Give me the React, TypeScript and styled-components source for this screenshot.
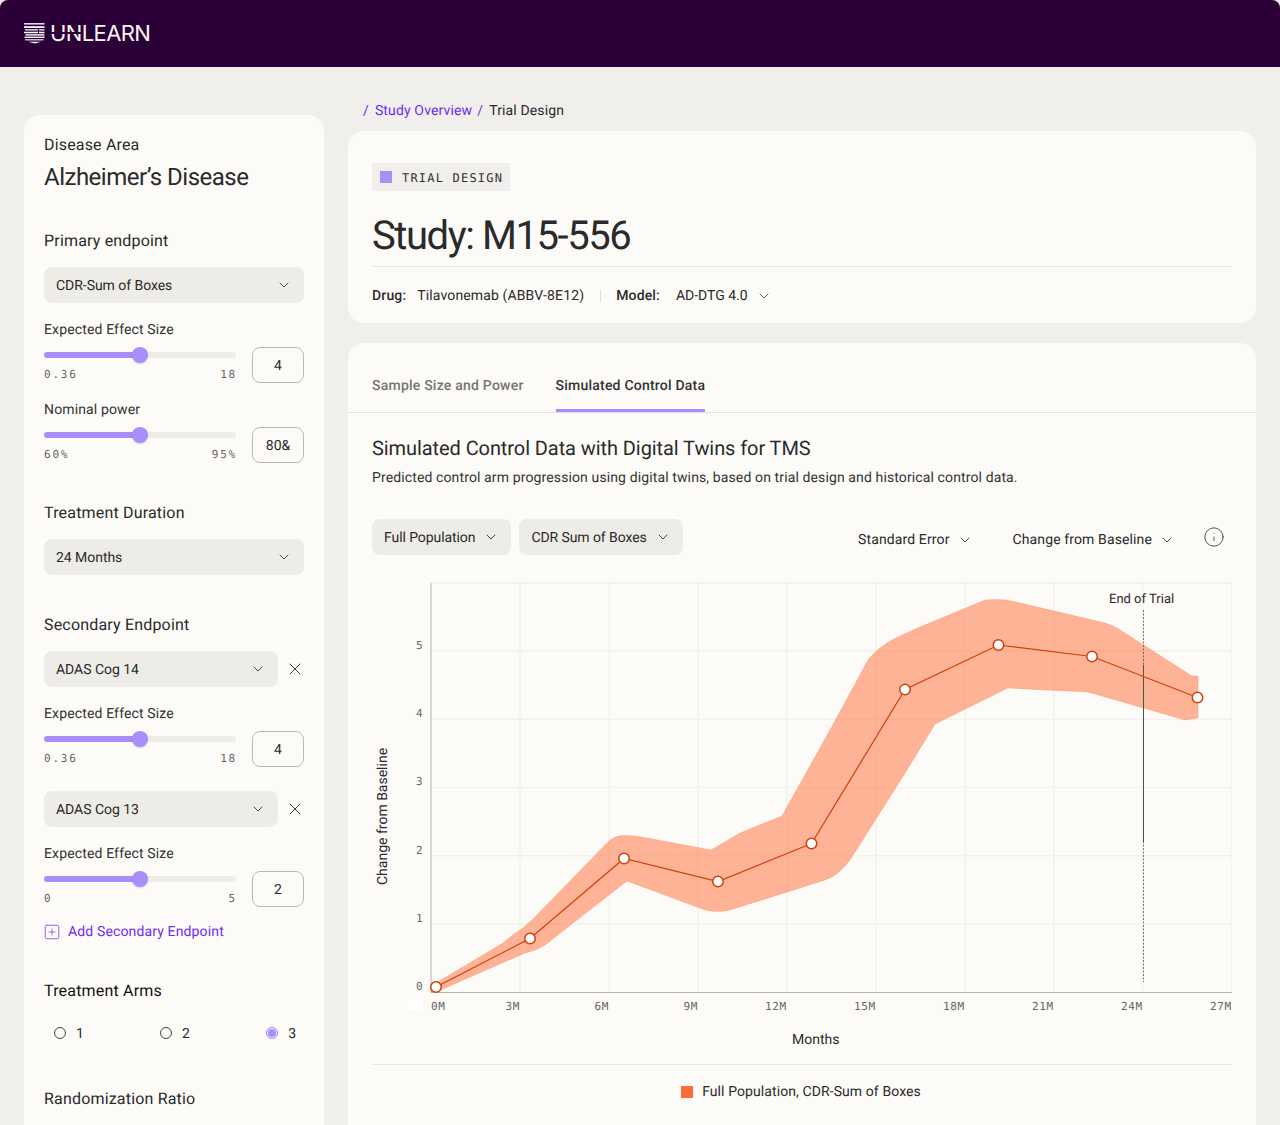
import React from "react";
import styled, { createGlobalStyle } from "styled-components";
import { ChevronDown, X, Info, SquarePlus } from "lucide-react";

const GlobalStyle = createGlobalStyle`
  html, body { margin: 0; padding: 0; background: #f0efeb; }
  * { box-sizing: border-box; }
  body {
    font-family: Roboto, "Liberation Sans", sans-serif;
    color: #2a2a2a;
    text-rendering: geometricPrecision;
  }
`;

const Page = styled.div`
  width: 1280px;
  height: 1125px;
  overflow: hidden;
  background: #f0efeb;
`;
const Header = styled.header`
  height: 67px;
  background: #2b0038;
  border-radius: 8px 8px 0 0;
  display: flex;
  align-items: center;
  padding-left: 24px;
  gap: 5px;
`;
const Wordmark = styled.div`
  position: relative;
  color: #fbf9f6;
  font-family: Inter, Roboto, sans-serif;
  font-size: 22px;
  font-weight: 400;
  letter-spacing: -0.6px;
  line-height: 24px;
  &::after {
    content: "";
    position: absolute;
    left: 0;
    top: 10px;
    width: 31px;
    height: 2px;
    background: #2b0038;
  }
`;
const Body = styled.div`
  display: flex;
  gap: 24px;
  padding: 0 24px;
  align-items: flex-start;
`;
const Sidebar = styled.aside`
  width: 300px;
  flex: none;
  margin-top: 48px;
  background: #fcfbf8;
  border-radius: 16px 16px 0 0;
  padding: 20px 20px 40px;
`;
const Main = styled.main`
  flex: 1;
  min-width: 0;
`;
const Breadcrumb = styled.nav`
  height: 64px;
  display: flex;
  gap: 5px;
  align-items: center;
  padding: 24px 0 0 15px;
  font-size: 14px;
  letter-spacing: 0.14px;
`;
const Crumb = styled.span<{ $link?: boolean }>`
  color: ${(p) => (p.$link ? "#6f2cf5" : "#2a2a2a")};
`;
const CrumbSlash = styled(Crumb)`
  margin-right: 1px;
`;
const Card = styled.section`
  background: #fcfbf8;
  border-radius: 16px;
`;
const SmallLabel = styled.div`
  font-size: 16px;
  line-height: 20px;
  letter-spacing: 0.17px;
`;
const DiseaseName = styled.h2`
  margin: 8px 0 0;
  font-size: 24px;
  line-height: 28px;
  font-weight: 400;
  letter-spacing: -0.5px;
`;
const SectionTitle = styled.h3<{ $top: number; $dark?: boolean }>`
  margin: ${(p) => p.$top}px 0 16px;
  font-size: 16px;
  line-height: 20px;
  font-weight: 400;
  letter-spacing: 0.18px;
  color: ${(p) => (p.$dark ? "#111" : "#2a2a2a")};
`;
const SelectBox = styled.div`
  height: 36px;
  flex: 1;
  background: #eeece7;
  border-radius: 8px;
  padding: 2px 12px 0;
  display: flex;
  align-items: center;
  justify-content: space-between;
  font-size: 14px;
  letter-spacing: -0.04px;
  color: #2a2a2a;
  svg { margin-top: -2px; }
`;
const SelectRow = styled.div<{ $top?: number }>`
  display: flex;
  align-items: center;
  margin-top: ${(p) => p.$top ?? 0}px;
`;
const CloseSlot = styled.div`
  width: 27px;
  flex: none;
  display: flex;
  justify-content: flex-end;
  margin-right: -1px;
  color: #2a2a2a;
`;
const FieldLabel = styled.div<{ $top: number }>`
  margin-top: ${(p) => p.$top + 1}px;
  font-size: 14px;
  line-height: 18px;
  letter-spacing: 0.14px;
  color: #333;
`;
const SliderRow = styled.div`
  margin-top: 8px;
  display: grid;
  grid-template-columns: 192px 52px;
  column-gap: 16px;
  align-items: start;
`;
const SliderWrap = styled.div`
  padding-top: 5px;
`;
const Track = styled.div`
  position: relative;
  height: 6px;
  border-radius: 3px;
  background: #eeece7;
`;
const Fill = styled.div`
  height: 100%;
  border-radius: 3px;
  background: #a78ef8;
`;
const Thumb = styled.div`
  position: absolute;
  top: -5px;
  width: 16px;
  height: 16px;
  margin-left: -8px;
  border-radius: 50%;
  background: #a78ef8;
  box-shadow: 0 1px 2px rgba(60, 40, 120, 0.2);
`;
const Ends = styled.div`
  margin-top: 10px;
  display: flex;
  justify-content: space-between;
  font-family: "DejaVu Sans Mono", "Liberation Mono", monospace;
  font-size: 11px;
  line-height: 14px;
  letter-spacing: 1.8px;
  color: #666;
  margin-right: -1px;
`;
const ValueBox = styled.div`
  height: 36px;
  border: 1px solid #bcbab6;
  border-radius: 8px;
  padding-top: 2px;
  display: flex;
  align-items: center;
  justify-content: center;
  font-size: 14px;
`;
const AddLink = styled.div`
  margin: 16px 0 0 -1px;
  display: flex;
  align-items: center;
  gap: 7px;
  color: #6f2cf5;
  font-size: 14px;
  line-height: 18px;
  letter-spacing: 0.14px;
  svg { color: #8a5cf6; margin-top: -1px; }
`;
const RadioRow = styled.div`
  display: flex;
  justify-content: space-between;
  margin-top: 23px;
  padding: 0 8px 0 10px;
  height: 18px;
`;
const RadioItem = styled.label`
  display: flex;
  align-items: center;
  gap: 10px;
  font-size: 14px;
  padding-top: 2px;
`;
const RadioDot = styled.span<{ $on?: boolean }>`
  width: 12px;
  height: 12px;
  margin-top: -2px;
  border-radius: 50%;
  border: 1px solid ${(p) => (p.$on ? "#a78ef8" : "#444")};
  background: ${(p) => (p.$on ? "#a78ef8" : "transparent")};
  box-shadow: ${(p) => (p.$on ? "inset 0 0 0 1px #fcfbf8" : "none")};
`;

const TitleCard = styled(Card)`
  height: 192px;
  padding: 32px 24px 0;
`;
const Tag = styled.div`
  display: inline-flex;
  align-items: center;
  height: 28px;
  gap: 10px;
  padding: 1px 7px 0 8px;
  background: #f0efeb;
  font-family: "DejaVu Sans Mono", "Liberation Mono", monospace;
  font-size: 12px;
  letter-spacing: 1.2px;
  color: #333;
`;
const TagSwatch = styled.span`
  width: 12px;
  height: 12px;
  margin-top: -1px;
  background: #a78ef8;
`;
const StudyTitle = styled.h1`
  margin: 0;
  padding: 21px 0 6px;
  font-size: 40px;
  line-height: 48px;
  font-weight: 400;
  letter-spacing: -1.43px;
  border-bottom: 1px solid #e7e5e8;
`;
const MetaRow = styled.div`
  display: flex;
  align-items: center;
  height: 57px;
  font-size: 14px;
  padding-top: 1px;
`;
const MetaKey = styled.span`
  font-weight: 500;
  letter-spacing: 0.15px;
  margin-right: 11px;
`;
const MetaKeyWide = styled(MetaKey)`
  margin-right: 16px;
`;
const MetaDrug = styled.span`
  letter-spacing: 0.13px;
`;
const MetaDivider = styled.span`
  width: 1px;
  height: 12px;
  background: #e0dedb;
  margin: 0 15px 0 16px;
`;
const MetaChevron = styled.span`
  display: inline-flex;
  margin-left: 8px;
  color: #444;
`;
const DataCard = styled(Card)`
  margin-top: 20px;
  height: 900px;
  border-radius: 16px 16px 0 0;
`;
const Tabs = styled.div`
  display: flex;
  gap: 32px;
  height: 70px;
  padding: 0 24px;
  border-bottom: 1px solid #e2e0e0;
`;
const Tab = styled.div<{ $active?: boolean }>`
  display: flex;
  align-items: center;
  height: 69px;
  font-size: 14px;
  font-weight: 500;
  letter-spacing: 0.22px;
  color: ${(p) => (p.$active ? "#333" : "#77756f")};
  border-bottom: 3px solid ${(p) => (p.$active ? "#a78ef8" : "transparent")};
  padding-top: 20px;
`;
const Panel = styled.div`
  padding: 23px 24px 0;
`;
const PanelTitle = styled.h2`
  margin: 0;
  font-size: 20px;
  line-height: 24px;
  font-weight: 400;
  letter-spacing: -0.08px;
`;
const PanelDesc = styled.p`
  margin: 8px 0 -1px;
  font-size: 14px;
  line-height: 20px;
  letter-spacing: 0.12px;
  color: #333;
`;
const Controls = styled.div`
  margin-top: 32px;
  display: flex;
  align-items: center;
  height: 36px;
  gap: 8px;
`;
const PillSelect = styled.div`
  height: 36px;
  background: #eeece7;
  border-radius: 8px;
  padding: 2px 12px 0;
  display: flex;
  align-items: center;
  gap: 8px;
  font-size: 14px;
  letter-spacing: -0.08px;
  svg { margin-top: -2px; }
`;
const Spacer = styled.div`
  flex: 1;
`;
const PlainSelect = styled.div<{ $gap: number }>`
  display: flex;
  align-items: center;
  gap: 7px;
  font-size: 14px;
  letter-spacing: 0.12px;
  margin-top: 6px;
  margin-right: ${(p) => p.$gap}px;
`;
const InfoSlot = styled.div`
  display: flex;
  margin-right: 7px;
  color: #444;
`;
const ChartSvg = styled.svg`
  display: block;
  margin-top: 20px;
  width: 860px;
  height: 489px;
`;
const LegendBar = styled.div`
  border-top: 1px solid #e7e5e8;
  height: 54px;
  display: flex;
  align-items: center;
  justify-content: center;
  gap: 9px;
  padding-right: 2px;
  font-size: 14px;
  letter-spacing: 0.09px;
`;
const LegendSwatch = styled.span`
  width: 12px;
  height: 12px;
  background: #ff6b35;
`;

const Logo = () => (
  <svg width="21" height="21" viewBox="0 0 21 21" fill="none">
    <path d="M0 0H20.5V1.6H0Z" fill="#e6d6e6" />
    <path d="M0 3.2H20.5V5H0Z" fill="#ffffff" />
    <path d="M1 6.2H14V7.6H1ZM15 6.2H20.5V7.6H15Z" fill="#ffffff" />
    <path d="M0 8.8H14V10.2H0ZM15 8.8H20.5V10.2H15Z" fill="#ffffff" />
    <path d="M1.5 11.2H20.5V12.6H1.5Z" fill="#ffffff" />
    <path d="M0.5 13.6H20.5V15H0.5Z" fill="#ffffff" />
    <path d="M1 16.2H19.6V17.4H1Z" fill="#efe4ef" />
    <path d="M4 18.8H17L11 20.6Z" fill="#f8f3f6" />
  </svg>
);

const Chevron = () => <ChevronDown size={16} strokeWidth={1.25} />;

const Slider = ({ min, max }: { min: string; max: string }) => (
  <SliderWrap>
    <Track>
      <Fill style={{ width: "50%" }} />
      <Thumb style={{ left: "50%" }} />
    </Track>
    <Ends>
      <span>{min}</span>
      <span>{max}</span>
    </Ends>
  </SliderWrap>
);

const Field = ({
  top,
  label,
  min,
  max,
  value,
}: {
  top: number;
  label: string;
  min: string;
  max: string;
  value: string;
}) => (
  <>
    <FieldLabel $top={top}>{label}</FieldLabel>
    <SliderRow>
      <Slider min={min} max={max} />
      <ValueBox>{value}</ValueBox>
    </SliderRow>
  </>
);

const gridX = [520, 609, 698, 787, 876, 965, 1054, 1143, 1232];
const gridY = [583, 651, 719.3, 787.5, 855.7, 924];
const yLabels = ["0", "1", "2", "3", "4", "5"];
const xLabels: [string, number][] = [
  ["0M", 431],
  ["3M", 505.5],
  ["6M", 594.5],
  ["9M", 683.5],
  ["12M", 765],
  ["15M", 854],
  ["18M", 943],
  ["21M", 1032],
  ["24M", 1121],
  ["27M", 1210],
];
const points: [number, number][] = [
  [436, 987],
  [530, 938.5],
  [624, 858.5],
  [718, 881.5],
  [811.5, 843.5],
  [905, 689.5],
  [998.5, 645],
  [1092, 656.5],
  [1197.5, 697.5],
];
const band =
  "M431 987 L436 983 L503 943 Q515 933 523 928 L533 919 L608 842 Q614 836 622 835.5 Q632 835 642 837 L711 850 L740 833 L782 816 L830 730 L868 660 Q876 650 887 643 Q900 635 937 620 L985 600 Q996 599 1007 600 L1105 623 Q1112 625 1117 628 L1192 676 L1198 676 L1198 718 L1185 720 L1088 692 L1008 688 L935 724 L907 770 L850 860 Q838 876 825 880 L730 910 Q718 913 705 910 L627 881 L545 945 Q535 951 525 953 L436 992 L431 992 Z";

const Chart = () => (
  <ChartSvg viewBox="372 575 860 489">
    {gridX.map((x) => (
      <line key={x} x1={x} x2={x} y1={583} y2={992} stroke="#f3f1ee" strokeWidth={1.4} />
    ))}
    {gridY.map((y) => (
      <line key={y} x1={431} x2={1232} y1={y} y2={y} stroke="#f3f1ee" strokeWidth={1.4} />
    ))}
    <rect x={408} y={999} width={14} height={11} fill="#ffffff" />
    <line x1={431} x2={431} y1={583} y2={992.5} stroke="#b4b3b1" />
    <line x1={431} x2={1232} y1={992.5} y2={992.5} stroke="#b4b3b1" />
    <path d={band} fill="#ff6b35" fillOpacity={0.5} stroke="#ff6b35" strokeOpacity={0.25} strokeWidth={1} />
    <line x1={1143.5} x2={1143.5} y1={610} y2={982} stroke="#555" strokeDasharray="2 1.5" strokeWidth={0.8} />
    <line x1={1143.5} x2={1143.5} y1={665} y2={842} stroke="#3a6236" />
    <polyline
      points={points.map((p) => p.join(",")).join(" ")}
      fill="none"
      stroke="#d13f0a"
      strokeWidth={1.2}
    />
    {points.map(([x, y]) => (
      <circle key={x} cx={x} cy={y} r={5.25} fill="#ffffff" stroke="#d13f0a" strokeWidth={1.5} />
    ))}
    <g fontFamily="'DejaVu Sans Mono', monospace" fontSize={11} fill="#666">
      {yLabels.map((l, i) => (
        <text key={l} x={416} y={990 - i * 68.2}>
          {l}
        </text>
      ))}
      {xLabels.map(([l, x]) => (
        <text key={l} x={x} y={1010} letterSpacing={0.6}>
          {l}
        </text>
      ))}
    </g>
    <g fontFamily="Roboto, sans-serif" fontSize={13} fill="#2a2a2a">
      <text x={1109} y={603}>
        End of Trial
      </text>
    </g>
    <g fontFamily="Roboto, sans-serif" fontSize={14} fill="#2a2a2a">
      <text x={792} y={1044}>
        Months
      </text>
      <text transform="translate(387 885) rotate(-90)">Change from Baseline</text>
    </g>
  </ChartSvg>
);

export default function App() {
  return (
    <Page>
      <GlobalStyle />
      <Header>
        <Logo />
        <Wordmark>UNLEARN</Wordmark>
      </Header>
      <Body>
        <Sidebar>
          <SmallLabel>Disease Area</SmallLabel>
          <DiseaseName>Alzheimer’s Disease</DiseaseName>

          <SectionTitle $top={40}>Primary endpoint</SectionTitle>
          <SelectRow>
            <SelectBox>
              CDR-Sum of Boxes
              <Chevron />
            </SelectBox>
          </SelectRow>
          <Field top={17} label="Expected Effect Size" min="0.36" max="18" value="4" />
          <Field top={17} label="Nominal power" min="60%" max="95%" value="80&" />

          <SectionTitle $top={40}>Treatment Duration</SectionTitle>
          <SelectRow>
            <SelectBox>
              24 Months
              <Chevron />
            </SelectBox>
          </SelectRow>

          <SectionTitle $top={40}>Secondary Endpoint</SectionTitle>
          <SelectRow>
            <SelectBox>
              ADAS Cog 14
              <Chevron />
            </SelectBox>
            <CloseSlot>
              <X size={20} strokeWidth={1.1} />
            </CloseSlot>
          </SelectRow>
          <Field top={17} label="Expected Effect Size" min="0.36" max="18" value="4" />
          <SelectRow $top={24}>
            <SelectBox>
              ADAS Cog 13
              <Chevron />
            </SelectBox>
            <CloseSlot>
              <X size={20} strokeWidth={1.1} />
            </CloseSlot>
          </SelectRow>
          <Field top={17} label="Expected Effect Size" min="0" max="5" value="2" />
          <AddLink>
            <SquarePlus size={18} strokeWidth={1.25} />
            Add Secondary Endpoint
          </AddLink>

          <SectionTitle $top={40} $dark>
            Treatment Arms
          </SectionTitle>
          <RadioRow>
            <RadioItem>
              <RadioDot />1
            </RadioItem>
            <RadioItem>
              <RadioDot />2
            </RadioItem>
            <RadioItem>
              <RadioDot $on />3
            </RadioItem>
          </RadioRow>

          <SectionTitle $top={47}>Randomization Ratio</SectionTitle>
        </Sidebar>

        <Main>
          <Breadcrumb>
            <CrumbSlash $link>/</CrumbSlash>
            <Crumb $link>Study Overview</Crumb>
            <CrumbSlash $link>/</CrumbSlash>
            <Crumb>Trial Design</Crumb>
          </Breadcrumb>
          <TitleCard>
            <Tag>
              <TagSwatch />
              TRIAL DESIGN
            </Tag>
            <StudyTitle>Study: M15-556</StudyTitle>
            <MetaRow>
              <MetaKey>Drug:</MetaKey>
              <MetaDrug>Tilavonemab (ABBV-8E12)</MetaDrug>
              <MetaDivider />
              <MetaKeyWide>Model:</MetaKeyWide>
              AD-DTG 4.0
              <MetaChevron>
                <Chevron />
              </MetaChevron>
            </MetaRow>
          </TitleCard>
          <DataCard>
            <Tabs>
              <Tab>Sample Size and Power</Tab>
              <Tab $active>Simulated Control Data</Tab>
            </Tabs>
            <Panel>
              <PanelTitle>Simulated Control Data with Digital Twins for TMS</PanelTitle>
              <PanelDesc>
                Predicted control arm progression using digital twins, based on trial design and
                historical control data.
              </PanelDesc>
              <Controls>
                <PillSelect>
                  Full Population
                  <Chevron />
                </PillSelect>
                <PillSelect>
                  CDR Sum of Boxes
                  <Chevron />
                </PillSelect>
                <Spacer />
                <PlainSelect $gap={32}>
                  Standard Error
                  <Chevron />
                </PlainSelect>
                <PlainSelect $gap={20}>
                  Change from Baseline
                  <Chevron />
                </PlainSelect>
                <InfoSlot>
                  <Info size={22} strokeWidth={1} />
                </InfoSlot>
              </Controls>
              <Chart />
              <LegendBar>
                <LegendSwatch />
                Full Population, CDR-Sum of Boxes
              </LegendBar>
            </Panel>
          </DataCard>
        </Main>
      </Body>
    </Page>
  );
}
